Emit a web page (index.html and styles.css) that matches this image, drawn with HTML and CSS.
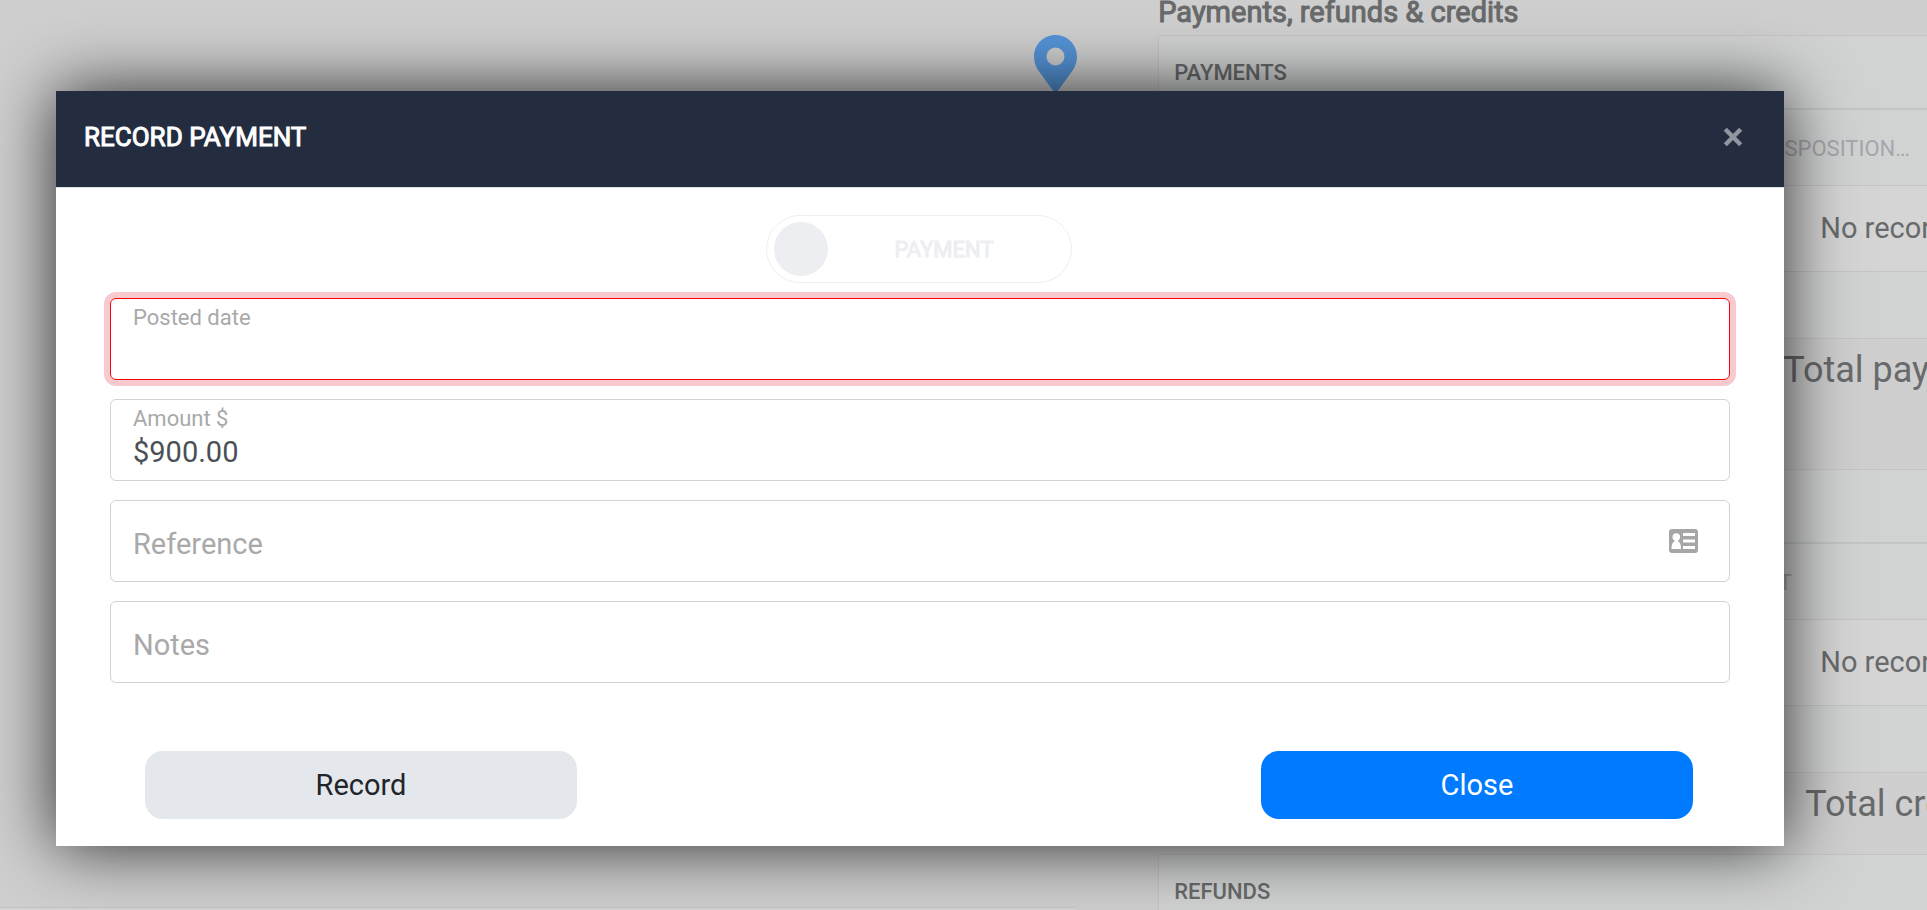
FILE: index.html
```html
<!DOCTYPE html>
<html lang="en">
<head>
<meta charset="utf-8">
<title>Record payment</title>
<link rel="stylesheet" href="styles.css">
</head>
<body>
<main class="page">
  <section class="map-column">
    <svg class="pin" viewBox="0 0 43 58" aria-hidden="true"><path fill-rule="evenodd" d="M21.500 0C9.500 0 0 9.500 0 21.500c0 5 1.500 9.500 4 13.500L20 57q1.500 2 3 0L39 35c2.500-4 4-8.500 4-13.500C43 9.500 33.500 0 21.500 0zM21.500 12.500a9 9 0 1 1 0 18a9 9 0 1 1 0-18z"/></svg>
    <div class="map-card"></div>
  </section>
  <section class="ledger">
    <h2 class="ledger-title">Payments, refunds &amp; credits</h2>
    <article class="panel">
      <h3 class="panel-title">PAYMENTS</h3>
      <div class="columns"><span class="column-name">DISPOSITION…</span></div>
      <div class="empty">No records</div>
      <div class="pager"></div>
    </article>
    <p class="total total-payments">Total payments</p>
    <article class="panel">
      <h3 class="panel-title">CREDITS</h3>
      <div class="columns"><span class="column-name column-amount">AMOUNT</span></div>
      <div class="empty">No records</div>
      <div class="pager"></div>
    </article>
    <p class="total total-credits">Total credits</p>
    <article class="panel">
      <h3 class="panel-title">REFUNDS</h3>
    </article>
  </section>
</main>

<div class="overlay">
  <form class="modal" role="dialog" aria-labelledby="modal-title">
    <header class="modal-header">
      <h1 class="modal-title" id="modal-title">RECORD PAYMENT</h1>
      <button class="dismiss" type="button" aria-label="Dismiss">
        <svg viewBox="0 0 20 20" aria-hidden="true"><path d="M3 3l14 14M17 3L3 17"/></svg>
      </button>
    </header>
    <div class="modal-body">
      <label class="switch">
        <input class="switch-input" type="checkbox" disabled>
        <span class="switch-text">PAYMENT</span>
      </label>
      <div class="field field-invalid">
        <label class="field-label" for="posted">Posted date</label>
        <input class="field-input" id="posted" type="text">
      </div>
      <div class="field">
        <label class="field-label" for="amount">Amount $</label>
        <input class="field-input" id="amount" type="text" value="$900.00">
      </div>
      <div class="field field-empty">
        <input class="field-input" type="text" placeholder="Reference" aria-label="Reference">
        <svg class="card-icon" viewBox="0 0 29 24" aria-hidden="true"><rect class="card-base" width="29" height="24" rx="3"/><circle cx="7.300" cy="8" r="3.800"/><path d="M5.500 10h3.600v2.500C11.500 13.500 12 16 12 20H2.500c0-4 .5-6.500 3-7.500zM14 4h12v3H14zM14 10.500h12v3H14zM14 17h12v3H14z"/></svg>
      </div>
      <div class="field field-empty">
        <input class="field-input" type="text" placeholder="Notes" aria-label="Notes">
      </div>
    </div>
    <footer class="modal-footer">
      <button class="button button-record" type="submit">Record</button>
      <button class="button button-close" type="button">Close</button>
    </footer>
  </form>
</div>
</body>
</html>
```

FILE: styles.css
```css
* {
  box-sizing: border-box;
}

body {
  margin: 0;
  background: #cfcfcf;
  color: #686a6b;
  font-family: Roboto, "Liberation Sans", sans-serif;
  font-size: 29px;
}

h1, h2, h3, p {
  margin: 0;
}

.page {
  display: flex;
  height: 100vh;
  overflow: hidden;
}

.map-column {
  display: flex;
  flex: 0 0 60%;
  flex-direction: column;
  justify-content: space-between;
  align-items: flex-end;
  padding: 35px 79px 0 0;
}

.pin {
  width: 43px;
  height: 58px;
  fill: #5594d8;
}

.map-card {
  width: 100%;
  height: 3px;
  border-top: 1px solid #c3c5c5;
  border-top-right-radius: 8px;
  background: #d4d4d4;
}

.ledger {
  flex: 1;
  min-width: 0;
  padding-left: 2px;
  white-space: nowrap;
}

.ledger-title {
  height: 35px;
  font-size: 29px;
  font-weight: 400;
  line-height: 24px;
  -webkit-text-stroke: 1px currentColor;
}

.panel {
  border: solid #c3c5c5;
  border-width: 1px 0 0 1px;
  background: #d1d3d2;
}

.panel-title {
  height: 74px;
  padding-left: 15px;
  border-bottom: 2px solid #c3c5c5;
  font-size: 22px;
  font-weight: 500;
  line-height: 73px;
}

.columns {
  display: flex;
  justify-content: flex-end;
  height: 75px;
  padding-right: 17px;
  color: #a5a6ad;
  font-size: 22px;
  line-height: 78px;
}

.column-amount {
  padding-right: 118px;
}

.empty {
  height: 87px;
  padding-left: 661px;
  border: solid #c3c5c5;
  border-width: 1px 0;
  background: #d5d5d5;
  line-height: 85px;
}

.pager {
  height: 67px;
  border-bottom: 1px solid #c3c5c5;
}

.total {
  font-size: 36px;
  line-height: 62px;
}

.total-payments {
  height: 130px;
  padding-left: 625px;
}

.total-credits {
  height: 81px;
  padding-left: 647px;
}

.overlay {
  position: absolute;
  inset: 0;
  padding: 91px 143px 0 56px;
}

.modal {
  background: #fff;
  box-shadow: 0 0 64px rgba(0, 0, 0, 0.8);
}

.modal-header {
  display: flex;
  justify-content: space-between;
  align-items: center;
  height: 97px;
  padding: 0 40px 4px 28px;
  border-bottom: 1px solid #dee2e6;
  background: #232d3f;
  color: #fff;
}

.modal-title {
  font-size: 26px;
  font-weight: 400;
  -webkit-text-stroke: 1px currentColor;
}

.dismiss {
  display: flex;
  padding: 0;
  border: 0;
  background: none;
}

.dismiss svg {
  width: 22px;
  height: 22px;
  fill: none;
  stroke: #9196a0;
  stroke-width: 4px;
}

.modal-body {
  display: grid;
  gap: 19px;
  padding: 27px 54px 0;
}

.switch {
  display: flex;
  align-items: center;
  justify-self: center;
  width: 306px;
  height: 68px;
  margin: 0 2px -4px 0;
  padding: 0 7px;
  border: 1px solid #eeeef1;
  border-radius: 34px;
}

.switch-input {
  width: 54px;
  height: 54px;
  margin: 0;
  border-radius: 50%;
  background: #edeef2;
  appearance: none;
}

.switch-text {
  flex: 1;
  padding-right: 4px;
  color: #edeef2;
  font-size: 22px;
  text-align: center;
  -webkit-text-stroke: 1px currentColor;
}

.field {
  display: flex;
  flex-direction: column;
  height: 82px;
  padding: 6px 22px 8px;
  border: 1px solid #ced4da;
  border-radius: 6px;
  color: #a9a9a9;
}

.field-invalid {
  border-color: #f00;
  box-shadow: 0 0 0 6px #f6cacf;
}

.field-label {
  font-size: 22px;
  line-height: 26px;
}

.field-input {
  flex: 1;
  min-width: 0;
  padding: 0;
  border: 0;
  outline: 0;
  background: none;
  color: #495057;
  font: inherit;
}

.field-input::placeholder {
  color: #a9a9a9;
  opacity: 1;
}

.field-empty {
  flex-direction: row;
  align-items: center;
  padding: 6px 31px 0 22px;
}

.card-icon {
  width: 29px;
  height: 24px;
  margin-bottom: 6px;
  fill: #fff;
}

.card-base {
  fill: #a6a6a6;
}

.modal-footer {
  display: flex;
  justify-content: space-between;
  padding: 68px 91px 27px 89px;
}

.button {
  width: 432px;
  height: 68px;
  padding: 0;
  border: 0;
  border-radius: 18px;
  font: inherit;
}

.button-record {
  background: #e4e7eb;
  color: #212529;
}

.button-close {
  background: #007bff;
  color: #fff;
}
```
